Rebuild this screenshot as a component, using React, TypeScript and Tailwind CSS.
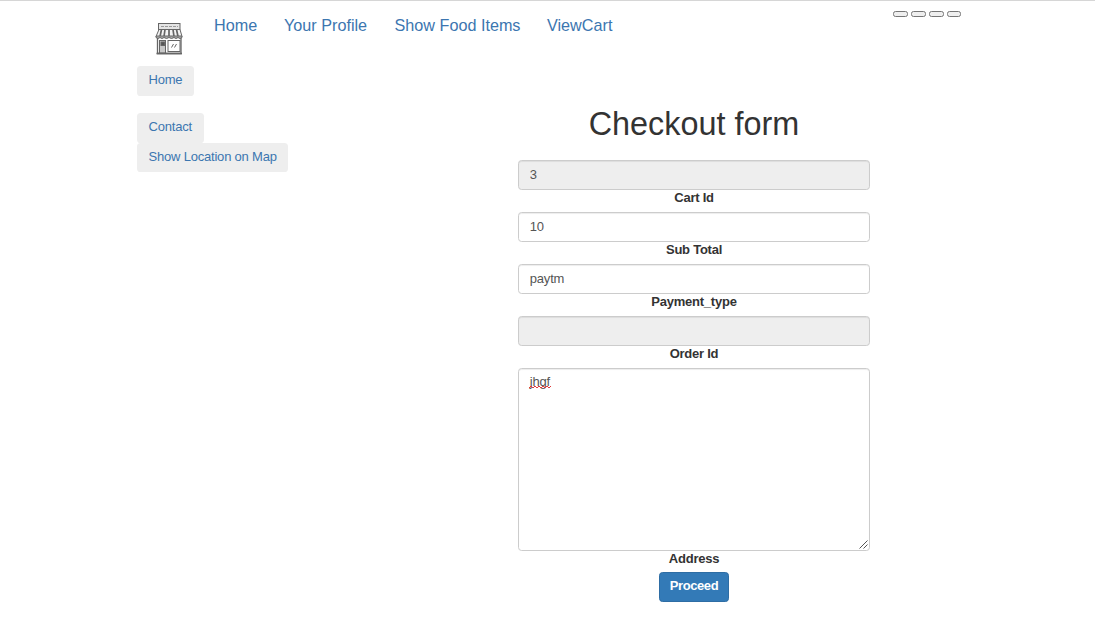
const navLinks = [
  { label: "Home", box: "w-[70px]" },
  { label: "Your Profile", box: "w-[110.5px]" },
  { label: "Show Food Items", box: "w-[152.5px]" },
  { label: "ViewCart", box: "w-[70px]" },
];

const fields = [
  { label: "Cart Id", value: "3", locked: true },
  { label: "Sub Total", value: "10", locked: false },
  { label: "Payment_type", value: "paytm", locked: false },
  { label: "Order Id", value: "", locked: true },
];

const control =
  "block w-[352px] rounded-[3.6px] border border-[#ccc] text-[13px] tracking-[-0.2px] text-[#555] shadow-[inset_0_1px_1px_rgba(0,0,0,0.075)] outline-none";

const caption = "block text-center text-[13px] leading-[15px] font-bold tracking-[-0.24px]";

function ShopLogo() {
  return (
    <svg className="h-[36px] w-[36px]" viewBox="0 0 36 36" fill="none" stroke="#666" strokeWidth="1">
      <rect x="7.5" y="4.5" width="21.5" height="6" fill="#e4e4e4" />
      <path d="M10 7.5h17" stroke="#999" strokeDasharray="3 1" />
      <path d="M8 10.5h21l2 7H5z" fill="#f4f4f4" />
      <path d="M10.5 10.5l-1.5 7M14 10.5l-1 7M18 10.5v7M22 10.5l1 7M25.500 10.500l1.500 7" strokeWidth="1.700" />
      <path d="M5 17v1.500q2 2 4 0q2 2 4 0q2.500 2 5 0q2.500 2 5 0q2 2 4 0q2 2 4 0V17z" fill="#aaa" />
      <path d="M6.500 19v15.500h23.500V19" strokeWidth="1.300" />
      <rect x="8.500" y="21.500" width="6" height="12.500" fill="#c8c8c8" />
      <rect x="10" y="23" width="3.500" height="3.500" fill="#555" />
      <path d="M5.500 34.500h25.500" strokeWidth="1.600" />
      <rect x="17" y="21.500" width="12" height="11" fill="#fff" />
      <path d="M20.500 28.500l2-3.500M23.500 28.500l2-3.500" />
    </svg>
  );
}

function SideButton({ label, size }: { label: string; size: string }) {
  return (
    <a href="#" className={"block rounded-[3.6px] bg-[#eee] pl-[11.5px] text-[13px] leading-[28px] tracking-[-0.2px] whitespace-nowrap text-[#3c76b0] " + size}>
      {label}
    </a>
  );
}

export default function App() {
  return (
    <div className="h-[620px] w-[1095px] overflow-hidden border-t border-[#d6d6d6] bg-white font-['Liberation_Sans',Arial,sans-serif] text-[#333]">
      <header className="flex h-[65px] items-start pl-[137px]">
        <div className="w-[77px] pt-[18px] pl-[14px]">
          <ShopLogo />
        </div>
        <nav className="flex pt-[13px] text-[16.2px] leading-[22px] text-[#3c76b0]">
          {navLinks.map((link) => (
            <a key={link.label} href="#" className={"whitespace-nowrap " + link.box}>{link.label}</a>
          ))}
        </nav>
        <div className="ml-[276px] flex gap-[3px] pt-[10px]">
          {[0, 1, 2, 3].map((i) => (
            <button key={i} className="h-[6px] w-[15px] rounded-[2.5px] border border-[#767676] bg-[#efefef] last:w-[14px]" />
          ))}
        </div>
      </header>
      <div className="flex pl-[137px]">
        <aside className="w-[381px]">
          <SideButton label="Home" size="h-[30px] w-[57px]" />
          <div className="h-[17px]" />
          <SideButton label="Contact" size="h-[30px] w-[67px]" />
          <SideButton label="Show Location on Map" size="h-[29px] w-[151px]" />
        </aside>
        <main className="flex w-[352px] flex-col items-center pt-[39px]">
          <h1 className="mb-[16px] text-[32.4px] leading-[39px] whitespace-nowrap">Checkout form</h1>
          {fields.map((field) => (
            <label key={field.label} className={caption + " h-[52px]"}>
              <input
                defaultValue={field.value}
                readOnly={field.locked}
                className={control + " h-[30px] px-[10.8px] pb-[1px] font-normal " + (field.locked ? "bg-[#eee]" : "bg-white")}
              />
              {field.label}
            </label>
          ))}
          <label className={caption + " relative h-[204px]"}>
            <textarea
              defaultValue="jhgf"
              spellCheck={false}
              className={control + " h-[183px] resize-none bg-white px-[10.8px] py-[4.4px] leading-[18px] font-normal"}
            />
            <svg className="absolute top-[17px] left-[11px] h-[4px] w-[22px]" viewBox="0 0 22 4" fill="none" stroke="#e03a3a">
              <path d="M0 3l2-2 2 2 2-2 2 2 2-2 2 2 2-2 2 2 2-2 2 2 2-2" />
            </svg>
            <svg className="absolute top-[172px] left-[341px] h-[9px] w-[9px]" viewBox="0 0 9 9" stroke="#555">
              <path d="M0.500 8.500l8-8M4.500 8.500l4-4" />
            </svg>
            Address
          </label>
          <button className="h-[30px] w-[70px] rounded-[3.6px] border border-[#2e6da4] bg-[#337ab7] pb-[2px] text-[13px] leading-[26px] font-bold tracking-[-0.4px] text-white">
            Proceed
          </button>
        </main>
      </div>
    </div>
  );
}
